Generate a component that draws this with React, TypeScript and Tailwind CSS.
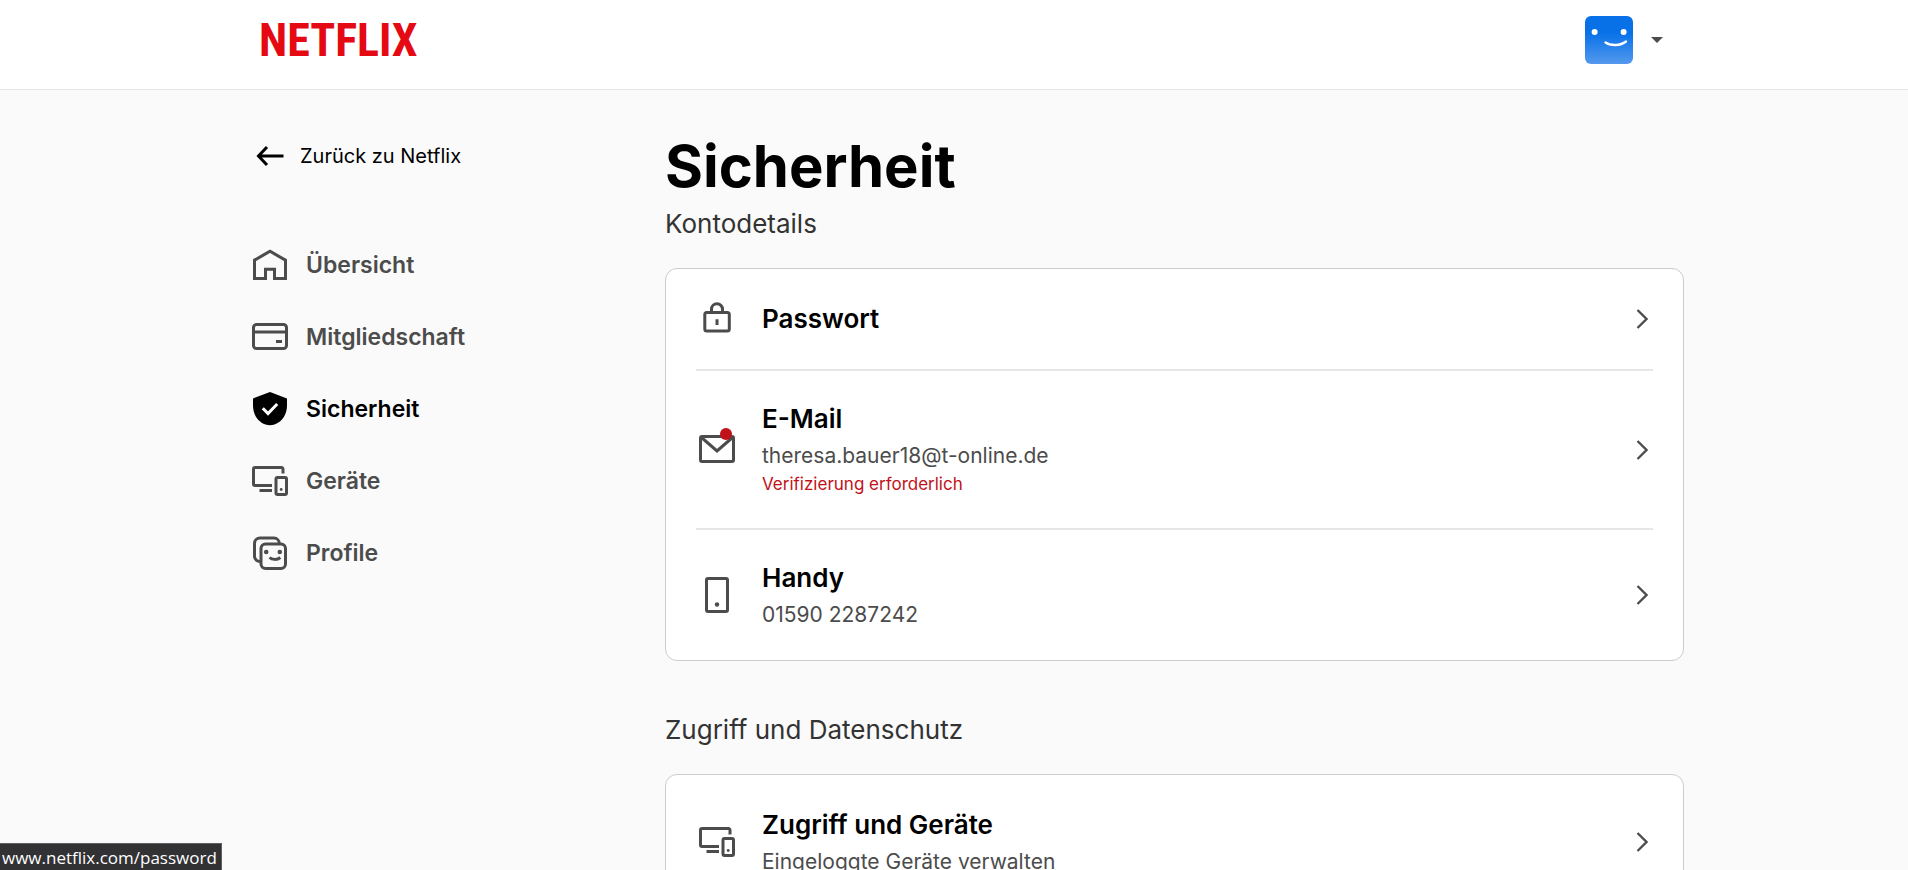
import type { ReactNode } from "react";

const iconProps = {
  viewBox: "0 0 36 36",
  fill: "none",
  stroke: "currentColor",
  strokeWidth: 3,
  "aria-hidden": true,
  className: "size-9 shrink-0 overflow-visible",
};

function HomeIcon() {
  return (
    <svg {...iconProps}>
      <path d="M2.5 13.1 18 4.3l15.5 8.8v18.4h-11v-9.3h-9v9.3h-11Z" />
    </svg>
  );
}

function CardIcon() {
  return (
    <svg {...iconProps}>
      <rect x="1.5" y="5.5" width="33" height="24" rx="3" />
      <path d="M1.5 13h33M24 22.5h6" />
    </svg>
  );
}

function ShieldIcon() {
  return (
    <svg {...iconProps} stroke="none">
      <path fill="currentColor" d="M18 1 35 7.500v7c0 9-5 16.500-12.500 19a13 13 0 0 1-9 0C6 31 1 23.500 1 14.500v-7Z" />
      <path stroke="#fff" strokeWidth="3" d="m10.8 17.3 5.2 5.2 9.2-9.5" />
    </svg>
  );
}

function DevicesIcon() {
  return (
    <svg {...iconProps}>
      <path d="M31 10.5V6a1.5 1.5 0 0 0-1.5-1.5H3A1.5 1.5 0 0 0 1.5 6v15A1.5 1.5 0 0 0 3 22.5h17M7.5 27.5H20" />
      <rect x="24" y="14.5" width="10.5" height="17" rx="1.5" />
      <circle cx="29.2" cy="26.5" r="1.4" fill="currentColor" stroke="none" />
    </svg>
  );
}

function ProfilesIcon() {
  return (
    <svg {...iconProps}>
      <rect x="9" y="9" width="24.5" height="24.5" rx="4.5" />
      <path d="M27.3 8.5A5.5 5.5 0 0 0 22 3H8a5.5 5.5 0 0 0-5.5 5.5v13A5.5 5.5 0 0 0 8 26.5" />
      <circle cx="14.2" cy="17" r="2.3" fill="currentColor" stroke="none" />
      <circle cx="27.8" cy="17" r="2.3" fill="currentColor" stroke="none" />
      <path d="M17.5 22.5c2.5 2.4 7.8 2.6 10.8 0" />
    </svg>
  );
}

function LockIcon() {
  return (
    <svg {...iconProps}>
      <rect x="5.8" y="11.5" width="24.5" height="18.5" rx="2" />
      <path d="M12.5 11.5V8.3a5.5 5.5 0 0 1 11 0v3.2M18 18.2V24" />
    </svg>
  );
}

function MailIcon() {
  return (
    <svg {...iconProps}>
      <rect x="1.5" y="4.5" width="33" height="25" rx="1.5" />
      <path d="M2.500 5.500 18 19 33.500 5.500" />
      <circle cx="27" cy="2" r="6" fill="#c11119" stroke="none" />
    </svg>
  );
}

function PhoneIcon() {
  return (
    <svg {...iconProps}>
      <rect x="7.5" y="1.5" width="21" height="33" rx="1.5" />
      <circle cx="18" cy="27.5" r="2.2" fill="currentColor" stroke="none" />
    </svg>
  );
}

function ArrowLeftIcon() {
  return (
    <svg {...iconProps}>
      <path d="M31.5 18H7M15 9l-8.5 9 8.5 9" />
    </svg>
  );
}

function Chevron() {
  return (
    <svg viewBox="0 0 12 24" fill="none" stroke="currentColor" strokeWidth="2.3" aria-hidden className="mr-[5px] h-6 w-3 shrink-0">
      <path d="m1.5 3 9 9-9 9" />
    </svg>
  );
}

function Avatar() {
  return (
    <svg viewBox="0 0 48 48" aria-hidden className="size-12 rounded-md">
      <defs>
        <linearGradient id="avatar" x1="0" y1="0" x2="0" y2="1">
          <stop offset="0.35" stopColor="#0871e8" />
          <stop offset="1" stopColor="#5499ee" />
        </linearGradient>
      </defs>
      <rect width="48" height="48" fill="url(#avatar)" />
      <circle cx="9.6" cy="16" r="3" fill="#fff" />
      <circle cx="38.6" cy="16" r="3" fill="#fff" />
      <path d="M20.5 26.5c5 3.5 15 3.5 20.5-1" fill="none" stroke="#fff" strokeWidth="2.3" strokeLinecap="round" />
    </svg>
  );
}

const navItems = [
  { label: "Übersicht", href: "#overview", icon: <HomeIcon /> },
  { label: "Mitgliedschaft", href: "#membership", icon: <CardIcon /> },
  { label: "Sicherheit", href: "#security", icon: <ShieldIcon />, active: true },
  { label: "Geräte", href: "#devices", icon: <DevicesIcon /> },
  { label: "Profile", href: "#profiles", icon: <ProfilesIcon /> },
];

type Row = {
  title: string;
  href: string;
  icon: ReactNode;
  detail?: string;
  warning?: string;
};

const accountRows: Row[] = [
  { title: "Passwort", href: "#password", icon: <LockIcon /> },
  {
    title: "E-Mail",
    href: "#email",
    icon: <MailIcon />,
    detail: "theresa.bauer18@t-online.de",
    warning: "Verifizierung erforderlich",
  },
  { title: "Handy", href: "#phone", icon: <PhoneIcon />, detail: "01590 2287242" },
];

const privacyRows: Row[] = [
  { title: "Zugriff und Geräte", href: "#manage", icon: <DevicesIcon />, detail: "Eingeloggte Geräte verwalten" },
];

function Section({ title, rows }: { title: string; rows: Row[] }) {
  return (
    <section>
      <h2 className="text-[26px] leading-9 text-[#333]">{title}</h2>
      <ul className="mt-[26px] divide-y-2 divide-[#e6e6e6] rounded-xl border border-[#ccc] bg-white px-[30px]">
        {rows.map((row) => (
          <li key={row.title}>
            <a href={row.href} className="flex items-center py-[30px] pl-[3px] text-[#4c4c4c] in-[li:first-child]:py-8">
              {row.icon}
              <span className="ml-[27px] flex flex-1 flex-col">
                <span className="text-[26px] leading-9 font-semibold text-black">{row.title}</span>
                {row.detail && <span className="mt-1 text-[21px] leading-[30px]">{row.detail}</span>}
                {row.warning && <span className="text-[17px] leading-[27px] text-[#c11119]">{row.warning}</span>}
              </span>
              <Chevron />
            </a>
          </li>
        ))}
      </ul>
    </section>
  );
}

export default function App() {
  return (
    <div className="min-h-screen bg-[#fafafa] font-['Inter','Liberation_Sans',sans-serif]">
      <header className="border-b border-[#e6e6e6] bg-white pb-[9px]">
        <div className="mx-auto flex h-20 max-w-[1460px] items-center justify-between pr-[21px] pl-[35px]">
          <a
            href="#home"
            className="font-['Liberation_Sans_Narrow','Roboto_Condensed','Open_Sans_Condensed','DejaVu_Sans_Condensed',sans-serif] text-[46px] leading-none font-bold text-[#e50914]"
          >
            NETFLIX
          </a>
          <button type="button" aria-label="Profilmenü" className="flex items-center gap-[18px]">
            <Avatar />
            <svg viewBox="0 0 12 6" aria-hidden className="h-1.5 w-3 text-[#4c4c4c]">
              <path d="M0 0h12L6 6Z" fill="currentColor" />
            </svg>
          </button>
        </div>
      </header>

      <div className="mx-auto flex max-w-[1460px] pl-7">
        <aside className="w-[413px] shrink-0 pt-12">
          <a href="#home" className="flex items-center gap-3 text-xl leading-9 text-black">
            <ArrowLeftIcon />
            Zurück zu Netflix
          </a>
          <nav className="mt-[55px]">
            {navItems.map((item) => (
              <a
                key={item.label}
                href={item.href}
                aria-current={item.active ? "page" : undefined}
                className="flex h-[72px] items-center gap-[18px] text-[23px] font-semibold text-[#4c4c4c] aria-[current=page]:text-black"
              >
                {item.icon}
                {item.label}
              </a>
            ))}
          </nav>
        </aside>

        <main className="min-w-0 flex-1 pt-10 pb-12">
          <h1 className="mb-1 text-[58px] leading-[72px] font-bold text-black">Sicherheit</h1>
          <div className="flex flex-col gap-[51px]">
            <Section title="Kontodetails" rows={accountRows} />
            <Section title="Zugriff und Datenschutz" rows={privacyRows} />
          </div>
        </main>
      </div>

      {/* link target shown by the browser while hovering */}
      <div className="fixed bottom-0 left-0 border-t border-r border-[#5f5f63] bg-[#323235] pt-0.5 pr-1 pl-0.5 font-['Open_Sans','Noto_Sans',sans-serif] text-[17px] leading-6 text-white">
        www.netflix.com/password
      </div>
    </div>
  );
}
